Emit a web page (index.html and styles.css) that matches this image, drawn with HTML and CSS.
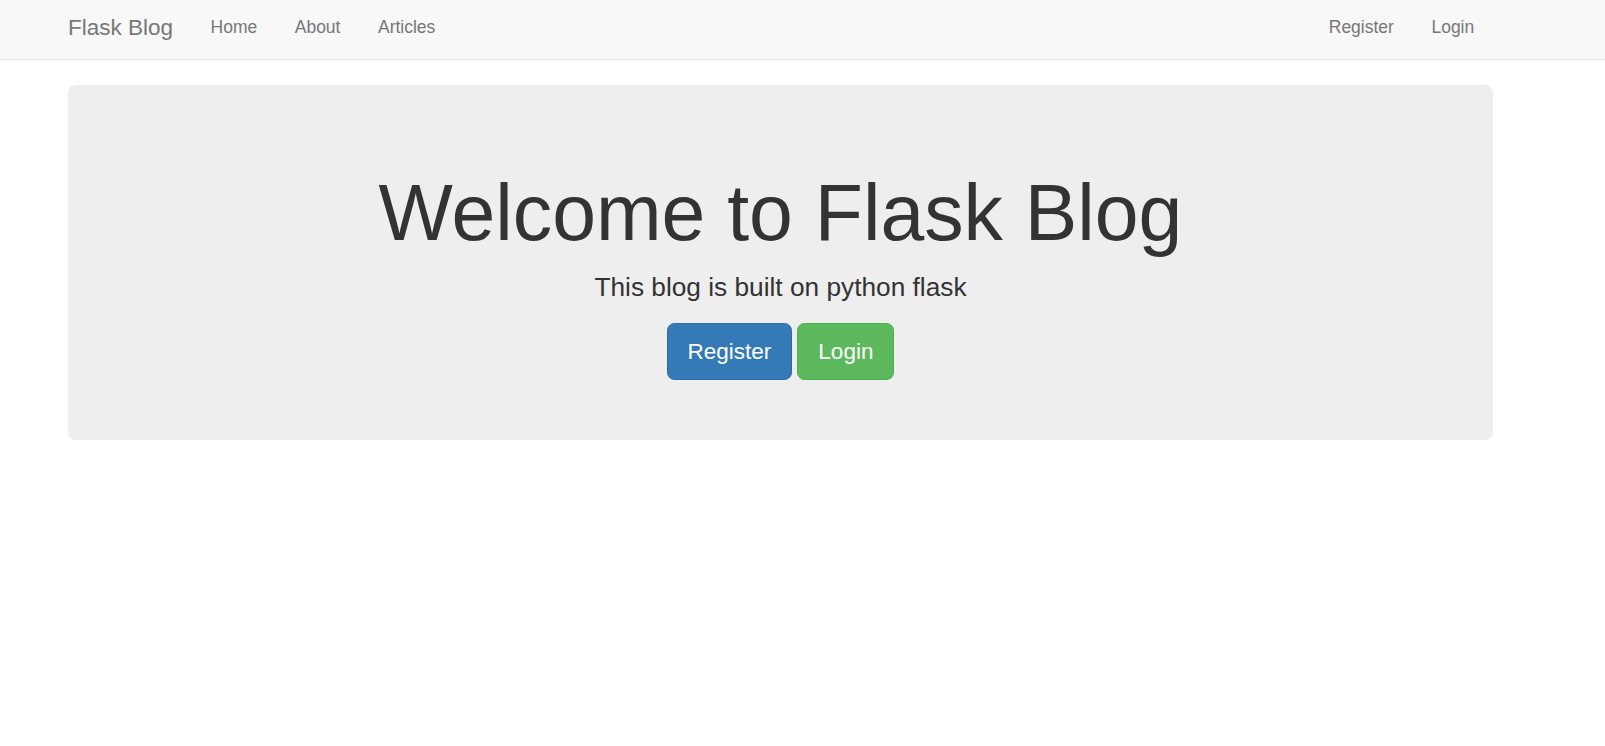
FILE: index.html
```html
<!DOCTYPE html>
<html lang="en">
<head>
<meta charset="utf-8">
<title>Flask Blog</title>
<link rel="stylesheet" href="styles.css">
</head>
<body>
<nav class="navbar">
  <div class="container nav-inner">
    <a class="brand" href="#">Flask Blog</a>
    <ul class="nav">
      <li><a href="#">Home</a></li>
      <li><a href="#">About</a></li>
      <li><a href="#">Articles</a></li>
    </ul>
    <ul class="nav nav-right">
      <li><a href="#">Register</a></li>
      <li><a href="#">Login</a></li>
    </ul>
  </div>
</nav>
<main class="container">
  <section class="jumbotron">
    <h1 class="title">Welcome to Flask Blog</h1>
    <p class="lead">This blog is built on python flask</p>
    <div class="actions">
      <a class="btn btn-primary" href="#">Register</a>
      <a class="btn btn-success" href="#">Login</a>
    </div>
  </section>
</main>
</body>
</html>
```

FILE: styles.css
```css
* {
  box-sizing: border-box;
}

html, body {
  margin: 0;
  padding: 0;
}

body {
  font-family: "Liberation Sans", Arial, sans-serif;
  font-size: 17.5px;
  line-height: 25px;
  color: #333333;
  background: #ffffff;
}

a {
  text-decoration: none;
}

.container {
  width: 1462.5px;
  margin-left: 49.25px;
  padding: 0 18.75px;
}

.navbar {
  height: 60px;
  background: #f8f8f8;
  border-bottom: 1px solid #e7e7e7;
  margin-bottom: 25px;
}

.nav-inner {
  display: flex;
  align-items: flex-start;
  height: 59px;
}

.brand {
  display: block;
  margin-left: -18.75px;
  padding: 15px 18.75px 0;
  font-size: 22.5px;
  line-height: 25px;
  color: #777777;
}

.nav {
  display: flex;
  list-style: none;
  margin: 0;
  padding: 0;
}

.nav a {
  display: block;
  padding: 15px 18.75px 0;
  line-height: 25px;
  font-size: 17.5px;
  color: #777777;
}

.nav-right {
  margin-left: auto;
  margin-right: 0;
}

.jumbotron {
  background: #eeeeee;
  border-radius: 7.5px;
  padding: 60px 75px 60px;
  text-align: center;
}

.title {
  margin: 24.5px 0 12.5px;
  font-size: 78.75px;
  line-height: 87px;
  font-weight: 500;
  color: #333333;
}

.lead {
  margin: 0 0 16.5px;
  font-size: 26.25px;
  line-height: 37.5px;
  font-weight: 200;
  color: #333333;
}

.actions {
  display: flex;
  justify-content: center;
  gap: 5px;
}

.btn {
  display: inline-block;
  padding: 12.5px 20px;
  font-size: 22.5px;
  line-height: 30px;
  border: 1.25px solid transparent;
  border-radius: 7.5px;
  color: #ffffff;
}

.btn-primary {
  background: #337ab7;
  border-color: #2e6da4;
}

.btn-success {
  background: #5cb85c;
  border-color: #4cae4c;
}
```
